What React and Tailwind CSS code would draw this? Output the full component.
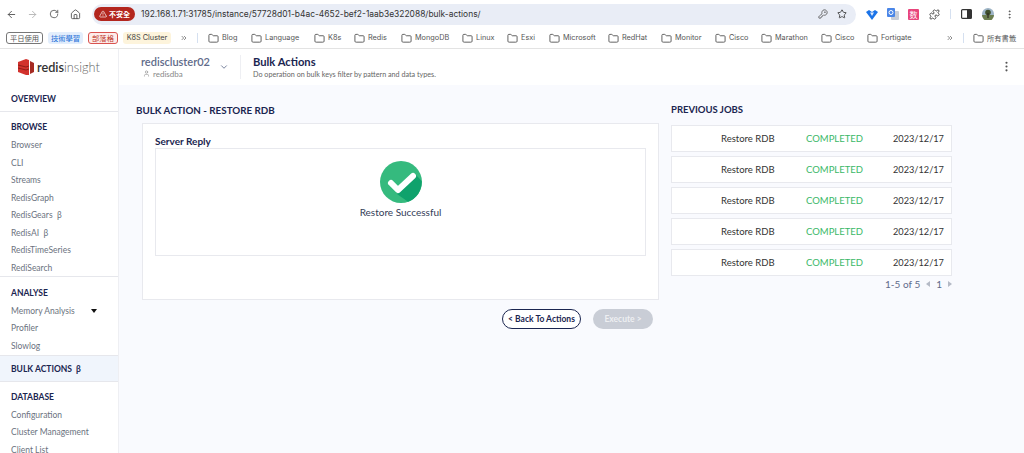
import React from "react";
import { ArrowLeft, ArrowRight, RotateCw, Home, Folder, TriangleAlert, KeyRound, Star, Puzzle, EllipsisVertical, ChevronDown, User, ChevronsRight } from "lucide-react";

const bookmarks = ["Blog", "Language", "K8s", "Redis", "MongoDB", "Linux", "Esxi", "Microsoft", "RedHat", "Monitor", "Cisco", "Marathon", "Cisco", "Fortigate"];
const bookmarkWidths = [43, 63, 40, 47, 61, 45, 42, 59, 53, 54, 46, 60, 46, 60];

const SideHead = ({ children }) => (
  <div className="h-[17.5px] leading-[17.5px] pl-[11px] text-[8.5px] font-bold text-[#1a2550]">{children}</div>
);

const SideItem = ({ children }) => (
  <div className="h-[17.5px] leading-[17.5px] pl-[11px] text-[8.5px] text-[#6b7280] whitespace-nowrap">{children}</div>
);

const Job = () => (
  <div className="h-[27px] pt-[1px] bg-white border border-[#e8e9ee] flex items-center text-[9.5px] text-[#333]">
    <span className="ml-[49px] w-[85px]">Restore RDB</span>
    <span className="w-[87px] text-[#3bb868]">COMPLETED</span>
    <span className="text-[9.2px]">2023/12/17</span>
  </div>
);

export default function App() {
  return (
    <div className="w-[1024px] h-[453px] overflow-hidden flex flex-col bg-white font-['Lato','Noto_Sans',sans-serif]">
      {/* browser toolbar */}
      <div className="h-[28px] flex items-center text-[#555] font-['Inter',sans-serif]">
        <ArrowLeft className="ml-[6px] w-[11px] h-[11px]" />
        <ArrowRight className="ml-[10px] w-[11px] h-[11px] text-[#b5b5b5]" />
        <RotateCw className="ml-[11px] w-[10px] h-[10px]" />
        <Home className="ml-[11px] w-[11px] h-[11px]" />
        <div className="ml-[11px] w-[764px] h-[21px] rounded-full bg-[#e9edf6] flex items-center">
          <div className="ml-[2px] h-[14px] w-[41px] rounded-full bg-[#b3261e] text-white flex items-center justify-center gap-[2px] text-[7px] font-bold font-['Noto_Sans_CJK_TC',sans-serif]">
            <TriangleAlert className="w-[8px] h-[8px]" />不安全
          </div>
          <span className="ml-[6px] text-[8.45px] text-[#333] whitespace-nowrap">192.168.1.71:31785/instance/57728d01-b4ac-4652-bef2-1aab3e322088/bulk-actions/</span>
          <KeyRound className="ml-auto w-[10px] h-[10px]" />
          <Star className="ml-[9px] mr-[9px] w-[10px] h-[10px] text-[#333]" />
        </div>
        <svg className="ml-[10px] w-[12px] h-[11px]" viewBox="0 0 12 11"><path d="M0 3l3-2 3 2 3-2 3 2-6 8z" fill="#1a73e8" /><path d="M4 3.5h4L6 7z" fill="#dfeafc" /></svg>
        <svg className="ml-[9px] w-[12px] h-[12px]" viewBox="0 0 12 12"><rect x="4" y="3" width="8" height="9" rx="1" fill="#c9ced8" /><rect width="8" height="9" rx="1" fill="#4a86e8" /><circle cx="4" cy="4.5" r="2" fill="none" stroke="#fff" strokeWidth="1" /></svg>
        <div className="ml-[9px] w-[11px] h-[11px] rounded-[1px] bg-[#e8457c] text-white text-[8px] leading-[11px] text-center font-['Noto_Sans_CJK_SC',sans-serif]">数</div>
        <Puzzle className="ml-[10px] w-[11px] h-[11px] text-[#444]" />
        <div className="ml-[10px] w-px h-[10px] bg-[#d5e0f0]" />
        <svg className="ml-[10px] w-[11px] h-[10px]" viewBox="0 0 11 10"><rect x=".6" y=".6" width="9.8" height="8.8" rx="1" fill="none" stroke="#333" strokeWidth="1.2" /><rect x="6" y=".6" width="4.4" height="8.8" fill="#333" /></svg>
        <svg className="ml-[10px] w-[12px] h-[12px]" viewBox="0 0 12 12"><circle cx="6" cy="6" r="6" fill="#9db4c6" /><path d="M0 7h12a6 6 0 0 1-12 0z" fill="#6b7d4f" /><circle cx="6" cy="4.5" r="2.8" fill="#3f4f2c" /><rect x="5.4" y="5" width="1.2" height="5" fill="#2d2a20" /></svg>
        <EllipsisVertical className="ml-[10px] w-[11px] h-[11px]" />
      </div>
      {/* bookmarks */}
      <div className="h-[21px] border-b border-[#e3e3e3] flex items-center text-[7.3px] text-[#555] font-['Inter',sans-serif] whitespace-nowrap">
        <div className="ml-[6px] w-[37px] h-[12px] border border-[#777] rounded-[3px] flex items-center justify-center font-['Noto_Sans_CJK_TC',sans-serif]">平日使用</div>
        <div className="ml-[5px] w-[35px] h-[12px] bg-[#e3eefc] text-[#1a6fd8] rounded-[3px] flex items-center justify-center font-['Noto_Sans_CJK_TC',sans-serif]">技術學習</div>
        <div className="ml-[5px] w-[30px] h-[12px] border border-[#d9534f] bg-[#fdecea] text-[#c0392b] rounded-[3px] flex items-center justify-center font-['Noto_Sans_CJK_TC',sans-serif]">部落格</div>
        <div className="ml-[5px] w-[48px] h-[12px] bg-[#fdf4dc] text-[#444] rounded-[3px] flex items-center justify-center">K8S Cluster</div>
        <ChevronsRight className="ml-[9px] w-[8px] h-[8px]" />
        <div className="ml-[9px] w-px h-[10px] bg-[#d5e0f0]" />
        <div className="ml-[10px] flex">
          {bookmarks.map((b, i) => (
            <div key={i} style={{ width: bookmarkWidths[i] }} className="flex items-center gap-[3px]">
              <Folder className="w-[11px] h-[11px] shrink-0" />{b}
            </div>
          ))}
        </div>
        <ChevronsRight className="ml-[19px] w-[8px] h-[8px]" />
        <div className="ml-[9px] w-px h-[10px] bg-[#d5e0f0]" />
        <Folder className="ml-[9px] w-[11px] h-[11px]" />
        <span className="ml-[3px] font-['Noto_Sans_CJK_TC',sans-serif]">所有書籤</span>
      </div>
      {/* app header */}
      <div className="h-[36px] flex items-center shrink-0 relative z-10">
        <div className="w-[119px] h-[36px] flex items-center border-r border-[#eeeff3]">
          <svg className="ml-[18px] w-[16px] h-[16px]" viewBox="0 0 16 16">
            <path d="M0 3l8-3 3 1v15l-3 0-8-3z" fill="#d2322d" />
            <path d="M0 6l8 2 3-1M0 9l8 2 3-1" fill="none" stroke="#8f1d17" strokeWidth="1" />
            <path d="M12 2l4 2v9l-4 2z" fill="#a52a22" />
          </svg>
          <span className="ml-[3px] text-[12.7px] leading-none text-[#333] whitespace-nowrap font-semibold">redis<span className="font-light text-[#666]">insight</span></span>
        </div>
        <div className="ml-[22px] w-[100px] flex flex-col">
          <span className="text-[11px] leading-[13px] font-semibold text-[#5f6b8a]">rediscluster02</span>
          <span className="ml-[2px] flex items-center gap-[3px] text-[8px] leading-[12px] text-[#888]"><User className="w-[7px] h-[7px]" />redisdba</span>
        </div>
        <ChevronDown className="w-[10px] h-[10px] text-[#5f6b8a] -ml-[22px]" />
        <div className="ml-[11px] w-px h-[24px] bg-[#eeeff3]" />
        <div className="ml-[12px] flex flex-col">
          <span className="text-[11.2px] leading-[14px] font-bold text-[#1a2550]">Bulk Actions</span>
          <span className="text-[7.2px] leading-[11px] text-[#666]">Do operation on bulk keys filter by pattern and data types.</span>
        </div>
        <EllipsisVertical className="absolute left-[1000px] top-[10px] w-[13px] h-[15px] text-[#555]" />
      </div>
      <div className="flex-1 flex min-h-0">
        {/* sidebar */}
        <div className="w-[119px] shrink-0 bg-white border-r border-[#eeeff3] overflow-hidden">
          <div className="h-[27px] border-b border-[#e6e7ec] pt-[6px]"><SideHead>OVERVIEW</SideHead></div>
          <div className="pt-[7px] border-b border-[#e6e7ec] h-[165px]">
            <div className="mb-[0.5px]"><SideHead>BROWSE</SideHead></div>
            <SideItem>Browser</SideItem>
            <SideItem>CLI</SideItem>
            <SideItem>Streams</SideItem>
            <SideItem>RedisGraph</SideItem>
            <SideItem>RedisGears &nbsp;β</SideItem>
            <SideItem>RedisAI &nbsp;β</SideItem>
            <SideItem>RedisTimeSeries</SideItem>
            <SideItem>RediSearch</SideItem>
          </div>
          <div className="pt-[8px] h-[78px]">
            <SideHead>ANALYSE</SideHead>
            <div className="relative">
              <SideItem>Memory Analysis</SideItem>
              <div className="absolute left-[91px] top-[6px] border-x-[3.5px] border-x-transparent border-t-[4px] border-t-[#111]" />
            </div>
            <SideItem>Profiler</SideItem>
            <SideItem>Slowlog</SideItem>
          </div>
          <div className="h-[27px] pt-[2px] flex items-center bg-[#f0f5fc] border-y border-[#e6e7ec]">
            <div className="w-full h-[17.5px] leading-[17.5px] pl-[11px] text-[8.5px] font-bold text-[#1a2550]">BULK ACTIONS &nbsp;β</div>
          </div>
          <div className="pt-[7px]">
            <SideHead>DATABASE</SideHead>
            <SideItem>Configuration</SideItem>
            <SideItem>Cluster Management</SideItem>
            <SideItem>Client List</SideItem>
          </div>
        </div>
        {/* main */}
        <div className="flex-1 bg-[#f9fafe] flex pl-[17px] pt-[20px]">
          <div className="w-[523px] shrink-0">
            <div className="text-[9.8px] leading-[10px] font-bold text-[#1a2550]">BULK ACTION - RESTORE RDB</div>
            <div className="ml-[6px] mt-[8px] h-[177px] bg-white border border-[#e8e9ee] px-[12px] pt-[12px]">
              <div className="mb-[2px] text-[10px] leading-[10px] font-bold text-[#1a2550]">Server Reply</div>
              <div className="h-[108px] border border-[#e8e9ee] flex flex-col items-center pt-[12px]">
                <svg className="w-[42px] h-[42px]" viewBox="0 0 42 42">
                  <circle cx="21" cy="21" r="21" fill="#35ba7e" />
                  <path d="M17 33L35 15l1-1 5.6 6A21 21 0 0 1 28 40.8z" fill="#0fa26c" />
                  <path d="M11 22l7 7 15-14" fill="none" stroke="#fff" strokeWidth="6" strokeLinecap="round" strokeLinejoin="round" />
                </svg>
                <div className="mt-[2px] text-[10px] leading-[14px] text-[#333c57]">Restore Successful</div>
              </div>
            </div>
            <div className="mt-[9px] ml-[366px] flex gap-[12px]">
              <div className="w-[79px] h-[20px] rounded-full bg-white border border-[#1a2550] text-[8.5px] font-bold text-[#1a2550] flex items-center justify-center">&lt; Back To Actions</div>
              <div className="w-[60px] h-[20px] rounded-full bg-[#c9cdd6] text-[8.5px] font-bold text-white/70 flex items-center justify-center">Execute &gt;</div>
            </div>
          </div>
          <div className="ml-[12px] w-[281px]">
            <div className="text-[9.5px] leading-[10px] font-bold text-[#1a2550]">PREVIOUS JOBS</div>
            <div className="mt-[10px] flex flex-col gap-[4px]">
              <Job /><Job /><Job /><Job /><Job />
            </div>
            <div className="mt-[1px] flex items-center justify-end gap-[6px] text-[10px] text-[#5f6b8a] leading-[14px]">
              <span>1-5 of 5</span>
              <span className="border-y-[3px] border-y-transparent border-r-[4px] border-r-[#b5bac6]" />
              <span>1</span>
              <span className="border-y-[3px] border-y-transparent border-l-[4px] border-l-[#b5bac6]" />
            </div>
          </div>
        </div>
      </div>
    </div>
  );
}
